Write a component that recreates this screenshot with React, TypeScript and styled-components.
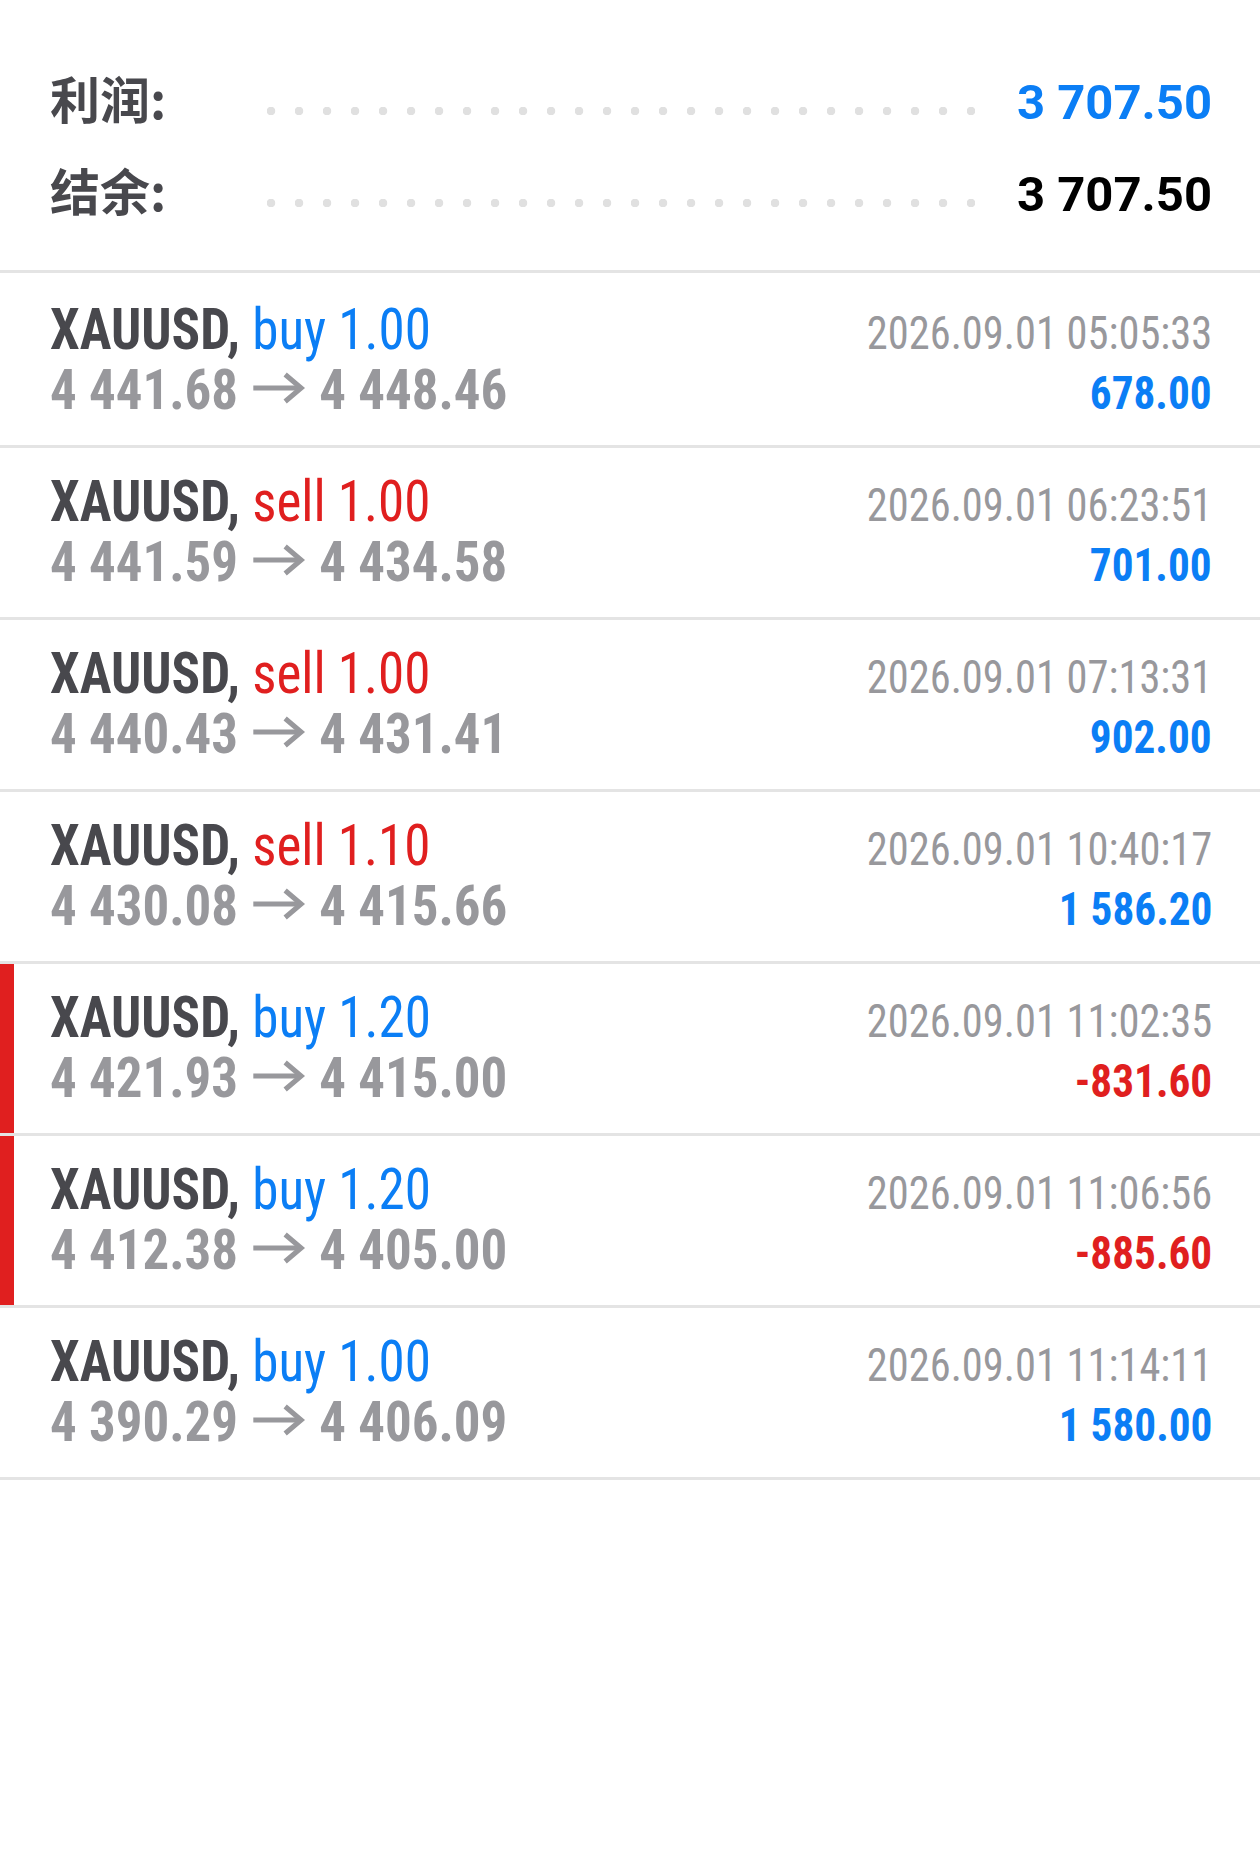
import React from "react";
import styled, { createGlobalStyle } from "styled-components";

const GlobalStyle = createGlobalStyle`
  html, body { margin: 0; padding: 0; background: #ffffff; }
  body { font-family: Roboto, "Noto Sans", sans-serif; }
`;

const BLUE = "#0b7ef5";
const RED = "#e01f1f";
const DARK = "#48484d";
const GRAY = "#98989c";
const LINE = "#e4e4e4";

const Page = styled.div`
  width: 1260px;
  min-height: 1868px;
  background: #fff;
`;

const Summary = styled.section`
  padding: 51px 48px 35px 50px;
  border-bottom: 3px solid ${LINE};
`;

const SummaryRow = styled.div`
  display: flex;
  align-items: baseline;
  height: 92px;
  line-height: 92px;
`;

const Label = styled.span`
  width: 217px;
  flex: none;
  font-family: "Noto Sans CJK SC", "Noto Sans", sans-serif;
  font-weight: 700;
  font-size: 50px;
  color: ${DARK};
`;

/* dotted leader: its box bottom sits on the baseline, dots drawn at the top */
const Leader = styled.span`
  display: inline-block;
  flex: none;
  width: 708px;
  height: 12px;
  background-image: radial-gradient(circle at 4px 4px, #e0e0e0 4px, transparent 4.6px);
  background-size: 28px 8px;
  background-repeat: repeat-x;
  background-position: 0 0;
`;

const Total = styled.span<{ $tone: "blue" | "black" }>`
  flex: 1;
  text-align: right;
  font-family: Roboto, sans-serif;
  font-weight: 700;
  font-size: 49px;
  color: ${(p) => (p.$tone === "blue" ? BLUE : "#000")};
`;

const DealList = styled.ul`
  list-style: none;
  margin: 0;
  padding: 0;
`;

const Deal = styled.li<{ $loss: boolean; $first: boolean }>`
  box-sizing: border-box;
  height: ${(p) => (p.$first ? 175 : 172)}px;
  padding: ${(p) => (p.$first ? 27 : 24)}px 48px 0 50px;
  border-bottom: 3px solid ${LINE};
  box-shadow: ${(p) => (p.$loss ? `inset 14px 0 0 ${RED}` : "none")};
`;

const Line = styled.div<{ $h: number }>`
  display: flex;
  justify-content: space-between;
  align-items: baseline;
  height: ${(p) => p.$h}px;
  white-space: nowrap;
  font-family: "Roboto Condensed", Roboto, sans-serif;
`;

/* the app uses a condensed face; squeeze Roboto horizontally to match */
const Condensed = styled.span<{ $x: number; $from: "left" | "right" }>`
  display: inline-block;
  transform: scaleX(${(p) => p.$x});
  transform-origin: ${(p) => p.$from} center;
`;

const Symbol = styled(Condensed)`
  font-size: 58px;
  line-height: 1;
  font-weight: 700;
  color: ${DARK};
`;

const Side = styled.span<{ $sell: boolean }>`
  font-weight: 400;
  color: ${(p) => (p.$sell ? RED : BLUE)};
`;

const Prices = styled(Condensed)`
  font-size: 56px;
  line-height: 1;
  font-weight: 700;
  color: ${GRAY};
`;

const Arrow = styled.svg`
  width: 55px;
  height: 32px;
  margin: 0 15px 0 16px;
  vertical-align: 5px;
`;

const Time = styled(Condensed)`
  font-size: 46px;
  line-height: 1;
  font-weight: 400;
  color: ${GRAY};
`;

const Profit = styled(Condensed)<{ $neg: boolean }>`
  font-size: 46px;
  line-height: 1;
  font-weight: 700;
  color: ${(p) => (p.$neg ? RED : BLUE)};
`;

type Row = {
  side: "buy" | "sell";
  vol: string;
  open: string;
  close: string;
  time: string;
  profit: string;
  sl?: boolean;
};

const deals: Row[] = [
  { side: "buy", vol: "1.00", open: "4 441.68", close: "4 448.46", time: "2026.09.01 05:05:33", profit: "678.00" },
  { side: "sell", vol: "1.00", open: "4 441.59", close: "4 434.58", time: "2026.09.01 06:23:51", profit: "701.00" },
  { side: "sell", vol: "1.00", open: "4 440.43", close: "4 431.41", time: "2026.09.01 07:13:31", profit: "902.00" },
  { side: "sell", vol: "1.10", open: "4 430.08", close: "4 415.66", time: "2026.09.01 10:40:17", profit: "1 586.20" },
  { side: "buy", vol: "1.20", open: "4 421.93", close: "4 415.00", time: "2026.09.01 11:02:35", profit: "-831.60", sl: true },
  { side: "buy", vol: "1.20", open: "4 412.38", close: "4 405.00", time: "2026.09.01 11:06:56", profit: "-885.60", sl: true },
  { side: "buy", vol: "1.00", open: "4 390.29", close: "4 406.09", time: "2026.09.01 11:14:11", profit: "1 580.00" },
];

function ArrowIcon() {
  return (
    <Arrow viewBox="0 0 52 32" preserveAspectRatio="none" aria-hidden="true">
      <path d="M0 16 H48" stroke={GRAY} strokeWidth="5" fill="none" />
      <path d="M32 2.5 L48 16 L32 29.5" stroke={GRAY} strokeWidth="5" fill="none" strokeLinejoin="miter" />
    </Arrow>
  );
}

export default function App() {
  return (
    <Page>
      <GlobalStyle />
      <Summary>
        <SummaryRow>
          <Label>利润:</Label>
          <Leader />
          <Total $tone="blue">3 707.50</Total>
        </SummaryRow>
        <SummaryRow>
          <Label>结余:</Label>
          <Leader />
          <Total $tone="black">3 707.50</Total>
        </SummaryRow>
      </Summary>
      <DealList>
        {deals.map((d, i) => (
          <Deal key={i} $loss={!!d.sl} $first={i === 0}>
            <Line $h={62}>
              <Symbol $x={0.915} $from="left">
                XAUUSD, <Side $sell={d.side === "sell"}>{d.side} {d.vol}</Side>
              </Symbol>
              <Time $x={0.923} $from="right">{d.time}</Time>
            </Line>
            <Line $h={60}>
              <Prices $x={0.945} $from="left">
                {d.open}
                <ArrowIcon />
                {d.close}
              </Prices>
              <Profit $x={0.94} $from="right" $neg={d.profit.startsWith("-")}>
                {d.profit}
              </Profit>
            </Line>
          </Deal>
        ))}
      </DealList>
    </Page>
  );
}
